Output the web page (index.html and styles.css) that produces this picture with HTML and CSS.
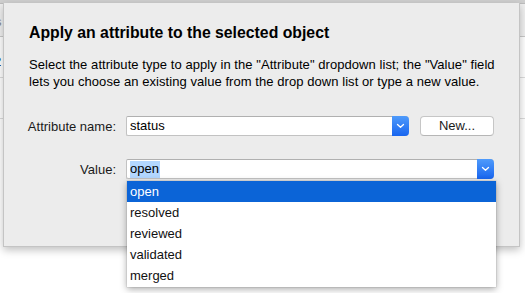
FILE: index.html
```html
<!DOCTYPE html>
<html>
<head>
<meta charset="utf-8">
<link rel="stylesheet" href="styles.css">
</head>
<body>
<div class="window">
  <div class="toolbar"></div>
  <div class="table">
    <div class="thead"><span class="hcell">s</span></div>
    <div class="trow"><span class="cell">2</span></div>
    <div class="trow empty"></div>
  </div>
</div>

<div class="sheet">
  <h1 class="title">Apply an attribute to the selected object</h1>
  <p class="desc">Select the attribute type to apply in the "Attribute" dropdown list; the "Value" field lets you choose an existing value from the drop down list or type a new value.</p>

  <div class="form">
    <div class="row">
      <label class="label">Attribute name:</label>
      <div class="combo combo-attr">
        <span class="combo-text">status</span>
        <span class="combo-btn"><svg width="9" height="6" viewBox="0 0 9 6"><path d="M1.5 1.5 L4.5 4.3 L7.5 1.5" fill="none" stroke="#fff" stroke-width="1.3" stroke-linecap="round" stroke-linejoin="round"/></svg></span>
      </div>
      <button class="btn">New...</button>
    </div>
    <div class="row row-value">
      <label class="label">Value:</label>
      <div class="combo combo-value">
        <span class="combo-text"><span class="sel">open</span></span>
        <span class="combo-btn"><svg width="9" height="6" viewBox="0 0 9 6"><path d="M1.5 1.5 L4.5 4.3 L7.5 1.5" fill="none" stroke="#fff" stroke-width="1.3" stroke-linecap="round" stroke-linejoin="round"/></svg></span>
      </div>
    </div>
  </div>

  <div class="actions">
    <button class="btn">Cancel</button>
    <button class="btn btn-default">OK</button>
  </div>
</div>

<ul class="dropdown">
  <li class="item active">open</li>
  <li class="item">resolved</li>
  <li class="item">reviewed</li>
  <li class="item">validated</li>
  <li class="item">merged</li>
</ul>
</body>
</html>
```

FILE: styles.css
```css
* { box-sizing: border-box; }
html, body { margin: 0; padding: 0; }
body {
  width: 525px;
  height: 293px;
  overflow: hidden;
  background: #ffffff;
  font-family: "Liberation Sans", Arial, sans-serif;
  font-size: 13px;
  color: #000;
  position: relative;
}

/* background window */
.window { width: 525px; height: 293px; }
.toolbar { height: 4px; background: #cfcfcf; border-bottom: 1px solid #bdbdbd; }
.table { display: flex; flex-direction: column; }
.thead {
  height: 33px;
  background: #f0f0f0;
  border-bottom: 1px solid #c9c9c9;
  color: #8a8a8a;
  padding: 11px 0 0 0;
  font-size: 13px;
  line-height: 14px;
}
.hcell { margin-left: -5px; }
.trow {
  height: 41px;
  border-bottom: 1px solid #dcdcdc;
  padding-top: 18px;
  line-height: 14px;
}
.cell { margin-left: -6px; }

/* sheet dialog */
.sheet {
  position: absolute;
  left: 3px;
  top: 3px;
  width: 517px;
  height: 244px;
  background: #ececec;
  border: 1px solid #c4c4c4;
  border-top: none;
  box-shadow: 0 3px 8px rgba(0,0,0,0.25);
  padding: 21px 25px 0 25px;
}
.title {
  margin: 0;
  font-size: 15.8px;
  font-weight: bold;
  line-height: 18px;
}
.desc {
  margin: 14px 0 0 0;
  font-size: 13px;
  line-height: 17px;
  letter-spacing: 0.06px;
  width: 475px;
}
.form { margin-top: 26px; display: flex; flex-direction: column; gap: 23px; }
.row { display: flex; align-items: center; height: 20px; }
.label {
  width: 87px;
  flex-shrink: 0;
  display: flex;
  justify-content: flex-end;
  white-space: nowrap;
  margin-right: 10px;
  color: #1a1a1a;
}
.combo {
  display: flex;
  height: 20px;
  background: #fff;
  border: 1px solid #c2c2c2;
  border-top-color: #b0b0b0;
  border-right: none;
  border-radius: 2px 4px 4px 2px;
}
.combo-attr { width: 287px; }
.combo-value { width: 373px; }
.combo-text { flex: 1; padding-left: 3px; line-height: 18px; }
.sel { background: #b3d7ff; padding: 0 1px 1px 0; display: inline-block; line-height: 16px; margin-top: 1px; }
.combo-btn {
  width: 17px;
  margin: -1px 0;
  height: 20px;
  background: linear-gradient(#4f9bfb, #1865ef);
  border-radius: 0 4px 4px 0;
  display: flex;
  align-items: center;
  justify-content: center;
}
.btn {
  font-family: "Liberation Sans", Arial, sans-serif;
  font-size: 13px;
  height: 20px;
  width: 75px;
  background: #fff;
  border: 1px solid #c6c6c6;
  border-bottom-color: #b6b6b6;
  border-radius: 4px;
  padding: 0;
  color: #1a1a1a;
  line-height: 18px;
}
.row .btn { margin-left: 11px; }

.actions {
  margin-top: 24px;
  display: flex;
  justify-content: flex-end;
  gap: 12px;
  padding-right: 20px;
}
.btn-default {
  background: linear-gradient(#4f9bfb, #1865ef);
  border-color: #1a62e0;
  color: #fff;
}

/* dropdown list */
.dropdown {
  position: absolute;
  left: 127px;
  top: 181px;
  width: 369px;
  margin: 0;
  padding: 0 0 1px 0;
  list-style: none;
  background: #fff;
  box-shadow: 0 2px 7px rgba(0,0,0,0.35), 0 0 0 0.5px rgba(0,0,0,0.12);
}
.item {
  height: 21px;
  line-height: 21px;
  padding-left: 3px;
  color: #111;
}
.item.active { background: #0b64d7; color: #fff; }
```
